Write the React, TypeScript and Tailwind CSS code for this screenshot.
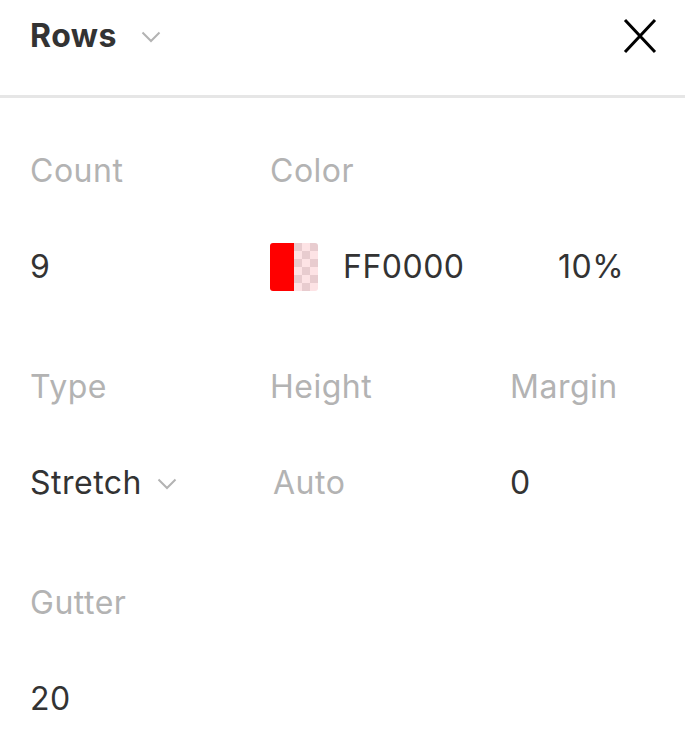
import React from "react";

const Chevron = ({ className }: { className?: string }) => (
  <svg className={className} width="20" height="12" viewBox="0 0 20 12" fill="none">
    <path d="M1.5 1.5L10 10L18.5 1.5" stroke="currentColor" strokeWidth="2" />
  </svg>
);

export default function App() {
  return (
    <div
      className="w-[685px] h-[745px] bg-white overflow-hidden text-[#333333] tracking-[0.5px]"
      style={{ fontFamily: "Inter, 'Noto Sans', sans-serif" }}
    >
      <div className="h-[98px] border-b-[3px] border-[#e6e6e6] px-[30px]">
        <div className="h-[72px] flex items-center justify-between">
          <div className="flex items-center gap-[24px]">
            <span className="text-[32px] font-bold leading-none">Rows</span>
            <Chevron className="text-[#b3b3b3] mt-[1px]" />
          </div>
          <svg width="34" height="36" viewBox="0 0 34 36" fill="none" className="mr-[-2px]">
            <path d="M2 2L32 34M32 2L2 34" stroke="#000" strokeWidth="3" />
          </svg>
        </div>
      </div>

      <div className="px-[30px] pt-[49px] flex flex-col gap-[72px] text-[32px]">
        <div className="grid grid-cols-[240px_240px_1fr]">
          <div className="flex flex-col gap-[48px]">
            <div className="h-[48px] leading-[48px] text-[#b3b3b3]">Count</div>
            <div className="h-[48px] leading-[48px]">9</div>
          </div>
          <div className="flex flex-col gap-[48px] col-span-2">
            <div className="h-[48px] leading-[48px] text-[#b3b3b3]">Color</div>
            <div className="h-[48px] flex items-center">
              <div className="w-[48px] h-[48px] rounded-[3px] overflow-hidden flex shrink-0 -mt-[1px]">
                <div className="w-[24px] h-full bg-[#ff0000]" />
                <div className="w-[24px] h-full grid grid-cols-3 grid-rows-6">
                  {Array.from({ length: 18 }).map((_, i) => {
                    const r = Math.floor(i / 3);
                    const c = i % 3;
                    const dark = (r + c) % 2 === 0;
                    return (
                      <div key={i} className={dark ? "bg-[#e8cccf]" : "bg-[#fde3e5]"} />
                    );
                  })}
                </div>
              </div>
              <span className="ml-[25px] leading-[48px] w-[120px] shrink-0">FF0000</span>
              <span className="ml-[95px] leading-[48px]">10%</span>
            </div>
          </div>
        </div>

        <div className="grid grid-cols-[240px_240px_1fr]">
          <div className="flex flex-col gap-[48px]">
            <div className="h-[48px] leading-[48px] text-[#b3b3b3]">Type</div>
            <div className="h-[48px] flex items-center gap-[15px]">
              <span className="leading-[48px]">Stretch</span>
              <Chevron className="text-[#b3b3b3] mt-[2px]" />
            </div>
          </div>
          <div className="flex flex-col gap-[48px]">
            <div className="h-[48px] leading-[48px] text-[#b3b3b3]">Height</div>
            <div className="h-[48px] leading-[48px] text-[#b3b3b3] pl-[3px]">Auto</div>
          </div>
          <div className="flex flex-col gap-[48px]">
            <div className="h-[48px] leading-[48px] text-[#b3b3b3]">Margin</div>
            <div className="h-[48px] leading-[48px]">0</div>
          </div>
        </div>

        <div className="grid grid-cols-[240px_240px_1fr]">
          <div className="flex flex-col gap-[48px]">
            <div className="h-[48px] leading-[48px] text-[#b3b3b3]">Gutter</div>
            <div className="h-[48px] leading-[48px]">20</div>
          </div>
        </div>
      </div>
    </div>
  );
}
